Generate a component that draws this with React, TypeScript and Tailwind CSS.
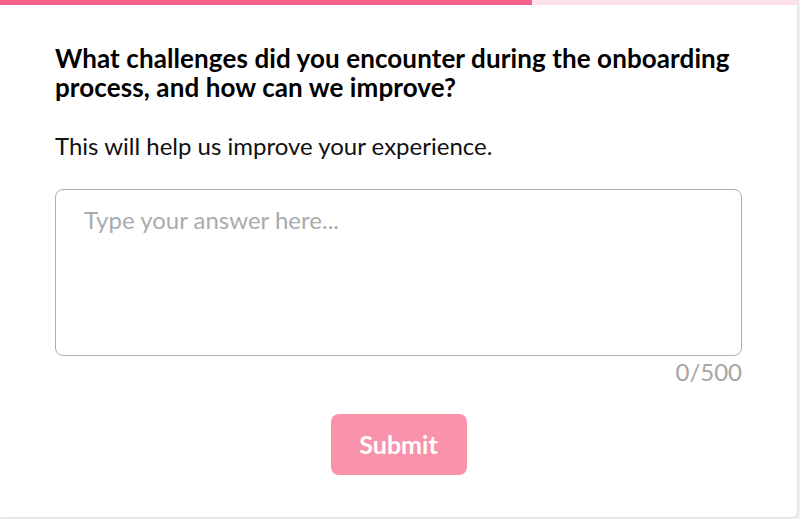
import React, { useState } from 'react';

const MAX = 500;

export default function App() {
  const [answer, setAnswer] = useState('');

  return (
    <div className="w-[800px] h-[519px] bg-[#f2f2f2] font-['Lato','Noto_Sans',sans-serif]">
      <div className="w-[797px] h-[517px] bg-white rounded-br-md shadow-[1px_1px_3px_rgba(0,0,0,0.08)] overflow-hidden flex flex-col">
        <div className="h-[5px] bg-[#fde2ea] shrink-0">
          <div className="h-full w-[532px] bg-[#f4628b]" />
        </div>

        <div className="flex flex-col px-[55px] pt-[39px]">
          <h2 className="text-[26px] leading-[29px] font-bold tracking-[0.1px] text-black">
            What challenges did you encounter during the onboarding process, and how can we improve?
          </h2>
          <p className="mt-[29px] text-[24px] leading-[30px] text-[#111]">
            This will help us improve your experience.
          </p>

          <textarea
            value={answer}
            maxLength={MAX}
            onChange={(e) => setAnswer(e.target.value)}
            placeholder="Type your answer here..."
            className="mt-[28px] h-[167px] w-full resize-none rounded-lg border border-[#b0b0b0] px-[28px] pt-[15px] text-[24px] leading-[30px] text-[#222] placeholder:text-[#a9abae] outline-none"
          />
          <div className="mt-[3px] text-right text-[24px] leading-[26px] text-[#a6a6a6]">
            {answer.length}/{MAX}
          </div>

          <div className="mt-[29px] flex justify-center">
            <button className="h-[61px] w-[136px] rounded-lg bg-[#f993ab] text-[25px] font-bold text-white">
              Submit
            </button>
          </div>
        </div>
      </div>
    </div>
  );
}
